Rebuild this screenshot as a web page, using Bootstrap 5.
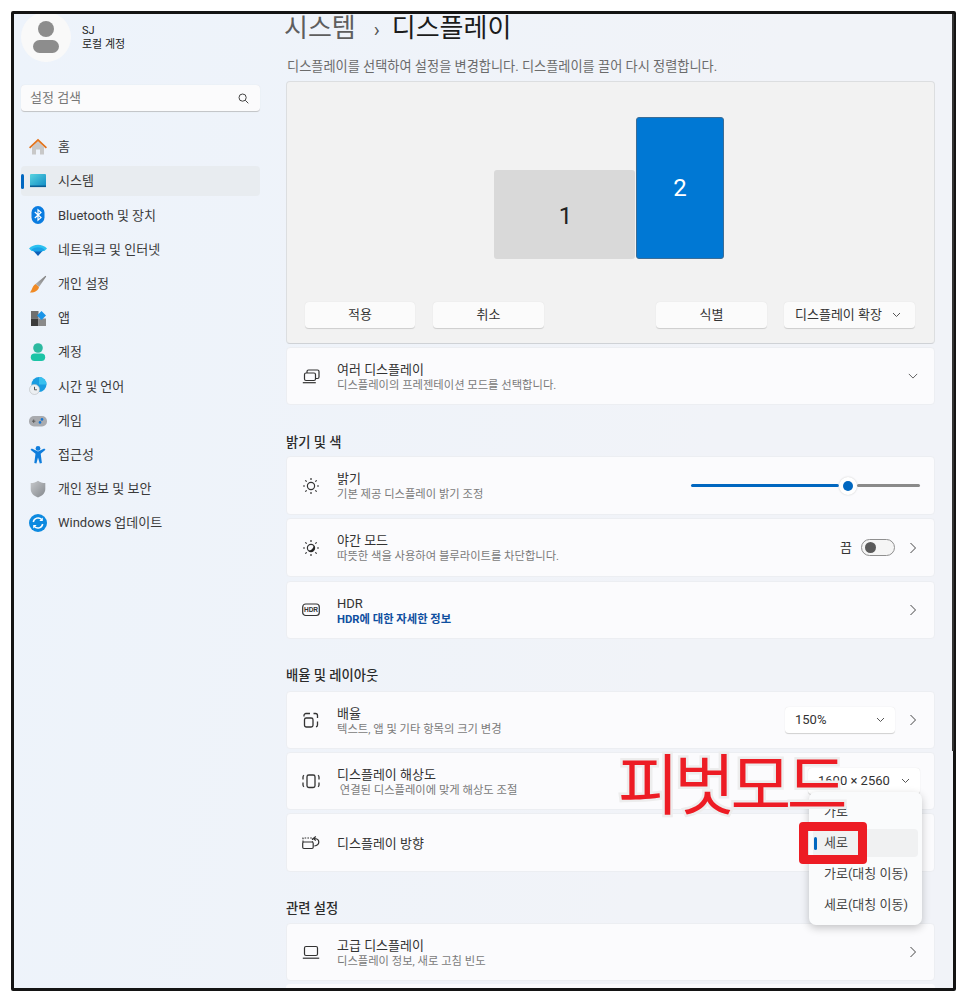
<!DOCTYPE html>
<html lang="ko">
<head>
<meta charset="UTF-8">
<title>디스플레이 설정</title>
<link href="https://cdn.jsdelivr.net/npm/bootstrap@5.3.3/dist/css/bootstrap.min.css" rel="stylesheet">
<style>
    html, body { height: 100%; }
    body { background: #fff; overflow: hidden; font-family: Roboto, "Noto Sans CJK KR", sans-serif; color: #333; font-size: 13px; }
    .win-frame { margin: 11px 0 0 11px; width: 945px; height: 980px; border: 3px solid #141414; border-radius: 2px; background: linear-gradient(100deg, #edf3fb, #f1f3f8 70%); position: relative; }
    .win-side { width: 272px; padding-left: 7px; flex: none; }
    .win-main { width: 649px; flex: none; }

    .avatar-ring { width: 50px; height: 50px; margin-top: -2px; border-radius: 50%; background: #f9f9f9; clip-path: inset(2px 0 0 0); }
    .user-row { gap: 11px; }
    .user-name { font-size: 11px; line-height: 14px; color: #222; }
    .search-box { width: 239px; height: 27px; margin-top: 23px; padding: 0 11px 0 9px; background: #fbfbfc; border-radius: 4px; border-bottom: 1px solid #c4c6c9; box-shadow: 0 0 1px #d8dbe0; color: #777; }
    .side-nav { margin-top: 20px; width: 239px; gap: 4.2px; }
    .side-item { height: 30px; padding-left: 8px; gap: 11px; border-radius: 4px; color: #3a3a3a; position: relative; }
    .side-item.is-on { background: #e8ecf0; }
    .side-item.is-on::before { content: ""; position: absolute; left: 0; top: 8px; width: 3px; height: 15px; border-radius: 2px; background: #0067c0; }

    .page-title { font-size: 26px; line-height: 26px; height: 26px; margin: 1px 0 0 -2px; color: #1b1b1b; white-space: nowrap; }
    .page-title .crumb { color: #5e5e5e; }
    .page-title .sep { font-size: 20px; color: #555; margin: 0 12px 0 18px; }
    .page-desc { margin: 17px 0 5px 1px; line-height: 18px; color: #6b6b6b; font-size: 13.2px; }

    .screen-panel { height: 263px; background: #f2f2f2; border: 1px solid #dcdee0; border-bottom-color: #cfd2d6; border-radius: 4px; margin-bottom: 3px; position: relative; }
    .screen-box { position: absolute; display: flex; align-items: center; justify-content: center; font-size: 24px; border-radius: 3px; }
    .screen-one { left: 207px; top: 88px; width: 141px; height: 89px; padding: 2px 0 0 2px; background: #d9d9d9; color: #222; }
    .screen-two { left: 349px; top: 35px; width: 88px; height: 142px; background: #0078d4; border: 1px solid #3c6d96; color: #fff; }
    .panel-btns { position: absolute; left: 18px; right: 19px; bottom: 14px; }
    .win-btn { height: 27px; width: 111px; background: #fbfbfb; border-radius: 4px; border: 0; border-bottom: 1px solid #d0d0d0; box-shadow: 0 0 1px #d8d8d8; font-size: 13px; color: #333; }
    .btn-apply { width: 110px; }
    .btn-cancel { margin-left: 18px; }
    .btn-mode { width: 131px; margin-left: 17px; padding: 0 0 0 11px; gap: 10px; }

    .set-card { height: 58px; background: #fbfbfd; border-radius: 4px; border: 1px solid #eceef2; padding: 0 16px 0 15px; margin-bottom: 3px; }
    .set-card.tall { height: 59px; }
    .set-card.gap-more { margin-bottom: 4px; }
    .card-stub { height: 4px; background: #fbfbfd; border-radius: 4px 4px 0 0; }
    .card-ico { width: 18px; height: 18px; margin-right: 17px; flex: none; }
    .card-txt { padding-top: 2px; }
    .card-ttl { font-size: 13px; line-height: 15px; color: #333; }
    .card-sub { font-size: 11.3px; line-height: 14px; margin-top: 2px; color: #7a7a7a; }
    .card-link { font-size: 11.3px; line-height: 14px; margin-top: 2px; color: #0f4fa0; font-weight: 700; }
    .sect-head { margin: 28px 0 3px; line-height: 20px; font-size: 13.3px; font-weight: 500; color: #2b2b2b; }
    .sect-scale { margin: 27px 0 5px; }
    .sect-rel { margin: 27px 0 4px; }
    .chev { width: 10px; height: 12px; margin-left: 13px; flex: none; }

    .bright-track { width: 229px; margin-right: -2px; }
    .bar-on { width: 148px; height: 3px; background: #0067c0; border-radius: 2px; }
    .bar-off { flex: 1; height: 3px; background: #8a8a8a; border-radius: 2px; }
    .bar-knob { width: 18px; height: 18px; border-radius: 50%; background: #fff; border: 4px solid #fff; box-shadow: 0 0 2px #ccc; flex: none; }
    .bar-knob i { display: block; width: 10px; height: 10px; border-radius: 50%; background: #0067c0; }
    .off-label { margin-right: 9px; }
    .tgl { width: 34px; height: 17px; border: 1px solid #8f8f8f; border-radius: 9px; background: #f5f5f5; padding-left: 3px; }
    .tgl i { display: block; width: 11px; height: 11px; border-radius: 50%; background: #5a5a5a; }
    .pick-box { height: 27px; background: #fff; border-radius: 4px; border-bottom: 1px solid #d4d4d4; box-shadow: 0 0 1px #d8d8d8; padding: 0 10px; }
    .pick-scale { width: 110px; }
    .pick-res { width: 112px; margin-right: -2px; }

    .scroll-line { position: absolute; right: -1px; top: 0; width: 2px; height: 737px; background: #333; }
    .flyout { position: absolute; left: 795px; top: 778px; width: 113px; height: 133px; padding: 6px 4px 4px; gap: 3px; background: #fafbfc; border-radius: 7px; box-shadow: 0 3px 9px rgba(0,0,0,.22); }
    .fly-item { height: 28px; padding-left: 11px; border-radius: 4px; position: relative; color: #444; white-space: nowrap; }
    .fly-item.is-on { background: #f0f1f2; }
    .fly-item.is-on::before { content: ""; position: absolute; left: 1px; top: 8px; width: 2.5px; height: 13px; background: #0067c0; border-radius: 2px; }
    .mark-box { position: absolute; left: 785px; top: 808px; width: 68px; height: 42px; border: 9px solid #ed1c24; border-radius: 4px; }
    .pivot-text { position: absolute; left: 604px; top: 731px; font-size: 66px; line-height: 70px; letter-spacing: -4.5px; color: #ed1c24; -webkit-text-stroke: 5px #ededed; paint-order: stroke fill; white-space: nowrap; font-family: "Noto Sans CJK KR", sans-serif; font-weight: 400; }
</style>
</head>
<body>
<div class="win-frame d-flex">
    <aside class="win-side">
        <div class="user-row d-flex align-items-center">
            <div class="avatar-ring d-flex align-items-center justify-content-center">
                <svg width="28" height="34" viewBox="0 0 28 34"><circle cx="14" cy="9" r="8" fill="#8d8d8d"/><rect x="1" y="20" width="26" height="13" rx="6.5" fill="#8d8d8d"/></svg>
            </div>
            <div class="user-name">SJ<br>로컬 계정</div>
        </div>
        <div class="search-box d-flex align-items-center justify-content-between">
            <span>설정 검색</span>
            <svg width="11" height="11" viewBox="0 0 11 11" fill="none" stroke="#444"><circle cx="4.6" cy="4.6" r="3.6"/><path d="m7.3 7.3 3 3"/></svg>
        </div>
        <nav class="side-nav d-flex flex-column">
            <div class="side-item d-flex align-items-center">
                <svg width="18" height="18" viewBox="0 0 18 18"><path d="M3 9 9 3.500 15 9v7.500h-4v-5H7v5H3z" fill="#c8c8c8"/><path d="M9 .8 0 9.200l1.200 1.300L9 3.300l7.800 7.200L18 9.200z" fill="#e2731c"/></svg>
                <span>홈</span>
            </div>
            <div class="side-item is-on d-flex align-items-center">
                <svg width="18" height="18" viewBox="0 0 18 18"><defs><linearGradient id="sysG" x1="0" y1="0" x2="1" y2="1"><stop offset="0" stop-color="#59d4e0"/><stop offset="1" stop-color="#0f8ac4"/></linearGradient></defs><rect x="1" y="2" width="16" height="13" rx="1" fill="url(#sysG)"/><rect x="1" y="13.500" width="16" height="1.600" fill="#0c5f95"/></svg>
                <span>시스템</span>
            </div>
            <div class="side-item d-flex align-items-center">
                <svg width="18" height="18" viewBox="0 0 18 18"><rect x="2.500" y="0" width="13" height="18" rx="6.500" fill="#0a7ce0"/><path d="M5.800 6 12 11.600 9 14.200V3.800L12 6.400 5.800 12" fill="none" stroke="#fff" stroke-width="1.200"/></svg>
                <span>Bluetooth 및 장치</span>
            </div>
            <div class="side-item d-flex align-items-center">
                <svg width="18" height="18" viewBox="0 0 18 18"><path d="M0 7.500C5 2.500 13 2.500 18 7.500l-2.600 2.600H2.600z" fill="#2cc0f0"/><path d="M2.600 8.400c3.600-3 9.200-3 12.800 0L12.800 11H5.200z" fill="#19a2e8"/><path d="M5 10.500h8L9 15z" fill="#0d5fb8"/></svg>
                <span>네트워크 및 인터넷</span>
            </div>
            <div class="side-item d-flex align-items-center">
                <svg width="18" height="18" viewBox="0 0 18 18"><defs><linearGradient id="brG" x1="1" y1="0" x2="0" y2="1"><stop offset="0" stop-color="#7d7d7d"/><stop offset="1" stop-color="#b5b5b5"/></linearGradient></defs><path d="M16.500.8 17.200 1.600 10 12 6.500 9z" fill="url(#brG)"/><path d="M6.500 9 10 12c-.5 3.500-5 6-9.200 5.500C3 16 3 11 6.500 9z" fill="#f08a24"/></svg>
                <span>개인 설정</span>
            </div>
            <div class="side-item d-flex align-items-center">
                <svg width="18" height="18" viewBox="0 0 18 18"><rect x="2" y="2" width="7.500" height="7.500" fill="#6f6f6f"/><rect x="2" y="9.500" width="7.500" height="7.500" fill="#3c3c3c"/><rect x="9.500" y="9.500" width="7.500" height="7.500" fill="#8a8a8a"/><path d="M12.500 2 17 6.500 12.500 11 8 6.500z" fill="#1a95e8"/></svg>
                <span>앱</span>
            </div>
            <div class="side-item d-flex align-items-center">
                <svg width="18" height="18" viewBox="0 0 18 18"><circle cx="9" cy="5" r="4.800" fill="#2cb9a0"/><rect x="1.800" y="10.600" width="14.400" height="7.400" rx="3.700" fill="#1cc4a6"/></svg>
                <span>계정</span>
            </div>
            <div class="side-item d-flex align-items-center">
                <svg width="18" height="18" viewBox="0 0 18 18"><circle cx="10" cy="7.500" r="7.500" fill="#1a9ce0"/><path d="M10 0a7.500 7.500 0 0 1 7.500 7.500H10z" fill="#38c0ee"/><circle cx="5.500" cy="12.500" r="5" fill="#eceff2" stroke="#b8bcc0" stroke-width=".6"/><path d="M5.500 9.800v3h2.400" fill="none" stroke="#555"/></svg>
                <span>시간 및 언어</span>
            </div>
            <div class="side-item d-flex align-items-center">
                <svg width="18" height="18" viewBox="0 0 18 18"><rect x="0" y="4" width="18" height="10.500" rx="5" fill="#a9abaf"/><path d="M3 9.200h3.400M4.700 7.500v3.400" stroke="#5c5c5c"/><circle cx="13" cy="7.400" r="1.300" fill="#1876d2"/><circle cx="11" cy="10.400" r="1.300" fill="#1876d2"/></svg>
                <span>게임</span>
            </div>
            <div class="side-item d-flex align-items-center">
                <svg width="18" height="18" viewBox="0 0 18 18"><circle cx="9" cy="2.400" r="2.400" fill="#0f7ddc"/><path d="M1.500 3.800 2.800 2.500 9 5.600l6.200-3.100 1.300 1.300-4.800 4 1.200 9.200-2.100.4L9 11.500l-1.600 5.900-2.100-.4 1.200-9.200z" fill="#0f7ddc"/></svg>
                <span>접근성</span>
            </div>
            <div class="side-item d-flex align-items-center">
                <svg width="18" height="18" viewBox="0 0 18 18"><defs><linearGradient id="shG" x1="0" y1="0" x2="1" y2="1"><stop offset="0" stop-color="#c6c8cb"/><stop offset="1" stop-color="#84888d"/></linearGradient></defs><path d="M9 .8c2 1.600 4.500 2.300 7.300 2.300V9c0 4-3 7-7.300 8.400C4.700 16 1.700 13 1.700 9V3.100C4.500 3.100 7 2.400 9 .8z" fill="url(#shG)"/></svg>
                <span>개인 정보 및 보안</span>
            </div>
            <div class="side-item d-flex align-items-center">
                <svg width="18" height="18" viewBox="0 0 18 18"><circle cx="9" cy="9" r="9" fill="#0d8ae0"/><path d="M4.300 8a4.900 4.900 0 0 1 8.400-2.500M13.700 10a4.900 4.900 0 0 1-8.400 2.500" fill="none" stroke="#fff" stroke-width="1.500"/><path d="M13.800 3.500v3.500h-3.500zM4.200 14.500V11h3.500z" fill="#fff"/></svg>
                <span>Windows 업데이트</span>
            </div>
        </nav>
    </aside>

    <main class="win-main">
        <div class="page-title"><span class="crumb">시스템</span><span class="sep">›</span>디스플레이</div>
        <div class="page-desc">디스플레이를 선택하여 설정을 변경합니다. 디스플레이를 끌어 다시 정렬합니다.</div>

        <section class="screen-panel">
            <div class="screen-box screen-one">1</div>
            <div class="screen-box screen-two">2</div>
            <div class="panel-btns d-flex">
                <button class="win-btn btn-apply">적용</button>
                <button class="win-btn btn-cancel">취소</button>
                <button class="win-btn ms-auto">식별</button>
                <button class="win-btn btn-mode d-flex align-items-center">디스플레이 확장
                    <svg width="9" height="6" viewBox="0 0 9 6" fill="none" stroke="#555"><path d="m1 1 3.500 3.500L8 1"/></svg>
                </button>
            </div>
        </section>

        <div class="set-card d-flex align-items-center">
            <svg class="card-ico" viewBox="0 0 18 18" fill="none" stroke="#333" stroke-width="1.200"><path d="M5 6V4.500A1.500 1.500 0 0 1 6.500 3h9A1.500 1.500 0 0 1 17 4.500V10a1.500 1.500 0 0 1-1.500 1.500H13.500"/><rect x="2.500" y="6" width="11" height="7.500" rx="1.500"/><path d="M.8 15.700h13"/></svg>
            <div class="card-txt">
                <div class="card-ttl">여러 디스플레이</div>
                <div class="card-sub">디스플레이의 프레젠테이션 모드를 선택합니다.</div>
            </div>
            <svg class="chev ms-auto" viewBox="0 0 12 8" fill="none" stroke="#444" stroke-width="1"><path d="m1 1.500 5 5 5-5"/></svg>
        </div>

        <div class="sect-head">밝기 및 색</div>
        <div class="set-card tall d-flex align-items-center">
            <svg class="card-ico" viewBox="0 0 18 18" fill="none" stroke="#333" stroke-width="1.200"><circle cx="9" cy="9" r="3.600"/><path d="M9 1v2M9 15v2M1 9h2M15 9h2M3.300 3.300l1.400 1.400M13.300 13.300l1.400 1.400M3.300 14.700l1.400-1.400M13.300 4.700l1.400-1.400"/></svg>
            <div class="card-txt">
                <div class="card-ttl">밝기</div>
                <div class="card-sub">기본 제공 디스플레이 밝기 조정</div>
            </div>
            <div class="bright-track ms-auto d-flex align-items-center">
                <div class="bar-on"></div>
                <div class="bar-knob"><i></i></div>
                <div class="bar-off"></div>
            </div>
        </div>
        <div class="set-card tall gap-more d-flex align-items-center">
            <svg class="card-ico" viewBox="0 0 18 18" fill="none" stroke="#333" stroke-width="1.200"><circle cx="9" cy="9" r="3.600"/><path d="M11.600 6.500A3.600 3.600 0 1 1 6.500 11.600c2.800 0 5.100-2.300 5.100-5.100z" fill="#222" stroke="none"/><path d="M9 1v2M9 15v2M1 9h2M15 9h2M3.300 3.300l1.400 1.400M13.300 13.300l1.400 1.400M3.300 14.700l1.400-1.400M13.300 4.700l1.400-1.400"/></svg>
            <div class="card-txt">
                <div class="card-ttl">야간 모드</div>
                <div class="card-sub">따뜻한 색을 사용하여 블루라이트를 차단합니다.</div>
            </div>
            <span class="ms-auto off-label">끔</span>
            <div class="tgl d-flex align-items-center"><i></i></div>
            <svg class="chev" viewBox="0 0 8 12" fill="none" stroke="#444" stroke-width="1"><path d="m1.500 1 5 5-5 5"/></svg>
        </div>
        <div class="set-card d-flex align-items-center">
            <svg class="card-ico" viewBox="0 0 18 18"><rect x=".7" y="3" width="16.600" height="11.500" rx="3" fill="none" stroke="#333" stroke-width="1.200"/><text x="9" y="11" text-anchor="middle" font-size="6.500" font-weight="700" fill="#333" font-family="Liberation Sans, sans-serif">HDR</text></svg>
            <div class="card-txt">
                <div class="card-ttl">HDR</div>
                <div class="card-link">HDR에 대한 자세한 정보</div>
            </div>
            <svg class="chev ms-auto" viewBox="0 0 8 12" fill="none" stroke="#444" stroke-width="1"><path d="m1.500 1 5 5-5 5"/></svg>
        </div>

        <div class="sect-head sect-scale">배율 및 레이아웃</div>
        <div class="set-card d-flex align-items-center">
            <svg class="card-ico" viewBox="0 0 18 18" fill="none" stroke="#333" stroke-width="1.300"><rect x="2.500" y="7" width="8.500" height="9" rx="1.800"/><path d="M2 5.500V4.500A2 2 0 0 1 4 2.500h4M11.500 2.500h2a2 2 0 0 1 2 2V7M15.500 10.500V14a2 2 0 0 1-1.500 1.900"/></svg>
            <div class="card-txt">
                <div class="card-ttl">배율</div>
                <div class="card-sub">텍스트, 앱 및 기타 항목의 크기 변경</div>
            </div>
            <div class="pick-box pick-scale ms-auto d-flex align-items-center justify-content-between">
                <span>150%</span>
                <svg width="9" height="6" viewBox="0 0 9 6" fill="none" stroke="#555"><path d="m1 1 3.500 3.500L8 1"/></svg>
            </div>
            <svg class="chev" viewBox="0 0 8 12" fill="none" stroke="#444" stroke-width="1"><path d="m1.500 1 5 5-5 5"/></svg>
        </div>
        <div class="set-card d-flex align-items-center">
            <svg class="card-ico" viewBox="0 0 18 18" fill="none" stroke="#333" stroke-width="1.300"><rect x="5" y="3" width="8" height="12.500" rx="1.800"/><path d="M1 7.500V5a2 2 0 0 1 1-1.700M1 10.500V13a2 2 0 0 0 1 1.700M17 7.500V5a2 2 0 0 0-1-1.700M17 10.500V13a2 2 0 0 1-1 1.700"/></svg>
            <div class="card-txt">
                <div class="card-ttl">디스플레이 해상도</div>
                <div class="card-sub">&nbsp;연결된 디스플레이에 맞게 해상도 조절</div>
            </div>
            <div class="pick-box pick-res ms-auto d-flex align-items-center justify-content-between">
                <span>1600 × 2560</span>
                <svg width="9" height="6" viewBox="0 0 9 6" fill="none" stroke="#555"><path d="m1 1 3.500 3.500L8 1"/></svg>
            </div>
        </div>
        <div class="set-card tall d-flex align-items-center">
            <svg class="card-ico" viewBox="0 0 18 18" fill="none" stroke="#333" stroke-width="1.200"><rect x=".7" y="8" width="10.500" height="6.500" rx="1.200"/><path d="M1 8V4h9.500v4" stroke-dasharray="1.600 1.200"/><path d="M11.800 4.500c3 0 5 1.500 5 3.500s-2 3.500-4.500 4"/><path d="M13.800 2.500l-2.500 2 2.500 2"/></svg>
            <div class="card-txt">
                <div class="card-ttl">디스플레이 방향</div>
            </div>
        </div>

        <div class="sect-head sect-rel">관련 설정</div>
        <div class="set-card d-flex align-items-center">
            <svg class="card-ico" viewBox="0 0 18 18" fill="none" stroke="#333" stroke-width="1.200"><rect x="2.500" y="3.500" width="13" height="9" rx="1.500"/><path d="M.8 15.200h16.400"/></svg>
            <div class="card-txt">
                <div class="card-ttl">고급 디스플레이</div>
                <div class="card-sub">디스플레이 정보, 새로 고침 빈도</div>
            </div>
            <svg class="chev ms-auto" viewBox="0 0 8 12" fill="none" stroke="#444" stroke-width="1"><path d="m1.500 1 5 5-5 5"/></svg>
        </div>
        <div class="card-stub"></div>
    </main>

    <div class="scroll-line"></div>
    <div class="flyout d-flex flex-column">
        <div class="fly-item d-flex align-items-center">가로</div>
        <div class="fly-item is-on d-flex align-items-center">세로</div>
        <div class="fly-item d-flex align-items-center">가로(대칭 이동)</div>
        <div class="fly-item d-flex align-items-center">세로(대칭 이동)</div>
    </div>
    <div class="pivot-text">피벗모드</div>
    <div class="mark-box"></div>
</div>
<script src="https://cdn.jsdelivr.net/npm/bootstrap@5.3.3/dist/js/bootstrap.bundle.min.js"></script>
</body>
</html>
